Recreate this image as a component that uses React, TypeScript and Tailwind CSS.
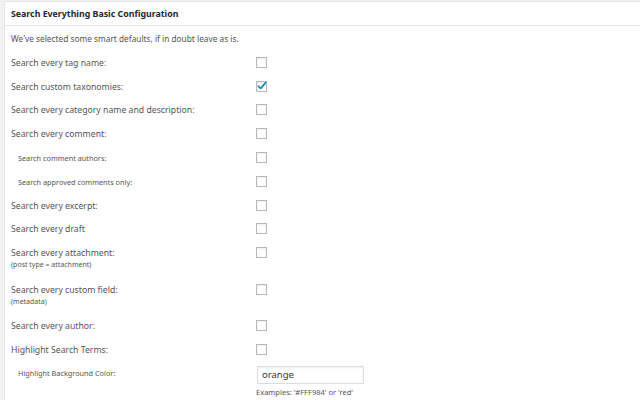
import React from "react";

type Row = {
  label: string;
  sub?: string;
  small?: boolean;
  checked?: boolean;
  h: number;
};

const rows: Row[] = [
  { label: "Search every tag name:", h: 24 },
  { label: "Search custom taxonomies:", checked: true, h: 23 },
  { label: "Search every category name and description:", h: 24 },
  { label: "Search every comment:", h: 24 },
  { label: "Search comment authors:", small: true, h: 24 },
  { label: "Search approved comments only:", small: true, h: 24 },
  { label: "Search every excerpt:", h: 23 },
  { label: "Search every draft", h: 24 },
  { label: "Search every attachment:", sub: "(post type = attachment)", h: 37 },
  { label: "Search every custom field:", sub: "(metadata)", h: 36 },
  { label: "Search every author:", h: 24 },
  { label: "Highlight Search Terms:", h: 22 },
];

function Checkbox({ checked }: { checked?: boolean }) {
  return (
    <div className="w-[11px] h-[11px] border border-[#b4b9be] bg-white shadow-[inset_0_1px_2px_rgba(0,0,0,0.08)] relative">
      {checked && (
        <svg viewBox="0 0 20 20" className="absolute left-[-1px] top-[-2px] w-[12px] h-[12px]">
          <path d="M4 10.5 L8 14 L16 4.5" fill="none" stroke="#1e8cbe" strokeWidth="3" strokeLinecap="round" strokeLinejoin="round" />
        </svg>
      )}
    </div>
  );
}

export default function App() {
  return (
    <div
      className="w-[640px] h-[400px] bg-[#f1f1f1] pt-px pl-1 overflow-hidden"
      style={{ fontFamily: '"Noto Sans", "Open Sans", sans-serif' }}
    >
      <div className="bg-white border-l border-t border-[#e5e5e5] h-[420px]">
        <div className="h-[24px] border-b border-[#e5e5e5] pl-[6px] flex items-center">
          <span className="text-[8.8px] font-bold text-[#23282d] leading-[12px]">
            Search Everything Basic Configuration
          </span>
        </div>
        <div className="pl-[6px]">
          <p className="pt-[7px] text-[8.3px] leading-[12px] text-[#555]">
            We've selected some smart defaults, if in doubt leave as is.
          </p>
          <div className="mt-[12px] flex flex-col">
            {rows.map((r) => (
              <div key={r.label} className="flex items-start" style={{ height: r.h }}>
                <div className={r.small ? "w-[245px] pl-[7px]" : "w-[245px]"}>
                  <div
                    className={
                      r.small
                        ? "text-[7.3px] leading-[12px] text-[#555]"
                        : "text-[8.7px] leading-[12px] text-[#555]"
                    }
                  >
                    {r.label}
                  </div>
                  {r.sub && (
                    <div className="text-[7px] leading-[10px] mt-[1px] text-[#555]">{r.sub}</div>
                  )}
                </div>
                <Checkbox checked={r.checked} />
              </div>
            ))}
            <div className="flex items-start">
              <div className="w-[245px] pl-[7px] pt-[2px]">
                <div className="text-[7.3px] leading-[11px] text-[#555]">Highlight Background Color:</div>
              </div>
              <div className="flex flex-col">
                <div className="ml-px w-[107px] h-[18px] border border-[#ddd] flex items-center pl-[4px] text-[9.5px] text-[#32373c] shadow-[inset_0_1px_2px_rgba(0,0,0,0.07)]">
                  orange
                </div>
                <div className="mt-[3px] text-[7.5px] leading-[10px] text-[#555]">
                  Examples: '#FFF984' or 'red'
                </div>
              </div>
            </div>
          </div>
        </div>
      </div>
    </div>
  );
}
